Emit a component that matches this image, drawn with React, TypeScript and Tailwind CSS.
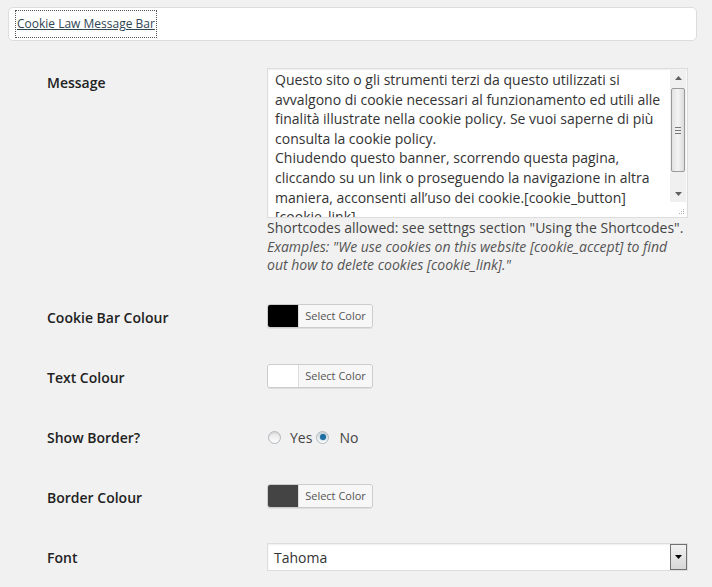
import React from "react";

function ColorPicker({ color }: { color: string }) {
  return (
    <div className="flex h-[24px] w-[106px] mb-[3px] rounded-[3px] border border-[#cccccc] shadow-[0_1px_0_rgba(0,0,0,0.08)] overflow-hidden">
      <div className="w-[30px] h-full" style={{ backgroundColor: color }} />
      <div className="flex-1 flex items-center justify-center bg-[#f7f7f7] border-l border-[#dddddd] text-[11px] text-[#555] leading-none">
        Select Color
      </div>
    </div>
  );
}

function Radio({ checked }: { checked?: boolean }) {
  return (
    <span className="inline-flex items-center justify-center w-[13px] h-[13px] rounded-full border border-[#b4b9be] bg-[linear-gradient(#e6e6e6,#fdfdfd)] shadow-[inset_0_1px_2px_rgba(0,0,0,0.1)]">
      {checked && <span className="w-[6px] h-[6px] rounded-full bg-[#1e6f9f] shadow-[0_0_2px_#4aa3d6]" />}
    </span>
  );
}

function Row({ label, children, className = "", labelClass = "" }: { label: string; children: React.ReactNode; className?: string; labelClass?: string }) {
  return (
    <div className={"flex " + className}>
      <div className={"w-[267px] shrink-0 pl-[47px] text-[14px] font-semibold text-[#222] " + labelClass}>{label}</div>
      <div className="flex-1">{children}</div>
    </div>
  );
}

export default function App() {
  const lines = [
    "Questo sito o gli strumenti terzi da questo utilizzati si",
    "avvalgono di cookie necessari al funzionamento ed utili alle",
    "finalità illustrate nella cookie policy. Se vuoi saperne di più",
    "consulta la cookie policy.",
    "Chiudendo questo banner, scorrendo questa pagina,",
    "cliccando su un link o proseguendo la navigazione in altra",
    "maniera, acconsenti all’uso dei cookie.[cookie_button]",
    "[cookie_link]",
  ];
  return (
    <div className="w-[712px] h-[587px] overflow-hidden bg-[#f1f1f1] text-[#444]" style={{ fontFamily: '"Open Sans", "Noto Sans", sans-serif' }}>
      <div className="pt-[7px] pl-[8px] pr-[15px]">
        <div className="h-[34px] bg-white border border-[#dddddd] rounded-[5px] flex items-center pl-[7px]">
          <span className="outline-1 outline-dotted outline-[#555] px-[1px] py-[4px] text-[12px] text-[#2f4553] underline leading-[18px]">
            Cookie Law Message Bar
          </span>
        </div>
      </div>

      <div className="pt-[27px]">
        <Row label="Message" className="h-[219px]" labelClass="pt-[4px]">
          <div className="w-[421px] h-[150px] bg-white border border-[#dddddd] flex shadow-[inset_0_1px_2px_rgba(0,0,0,0.07)]">
            <div className="flex-1 overflow-hidden pl-[7px] pt-[1px] text-[14px] leading-[19.6px] text-[#333]">
              {lines.map((l, i) => (
                <div key={i} className="whitespace-nowrap">{l}</div>
              ))}
            </div>
            <div className="w-[16px] shrink-0 flex flex-col bg-[#f0f0f0] mr-[1px] my-[1px]">
              <div className="h-[16px] flex items-center justify-center">
                <svg width="7" height="4" viewBox="0 0 7 4"><path d="M0 4 L3.5 0 L7 4 Z" fill="#606060" /></svg>
              </div>
              <div className="h-[2px]" />
              <div className="h-[84px] mx-[1px] rounded-[2px] border border-[#9a9a9a] bg-[linear-gradient(90deg,#e2e2e2,#f4f4f4,#dcdcdc)] flex items-center justify-center">
                <svg width="6" height="7" viewBox="0 0 6 7"><path d="M0 0.5H6M0 3.5H6M0 6.5H6" stroke="#777" strokeWidth="1" /></svg>
              </div>
              <div className="flex-1" />
              <div className="h-[16px] flex items-center justify-center">
                <svg width="7" height="4" viewBox="0 0 7 4"><path d="M0 0 L3.5 4 L7 0 Z" fill="#606060" /></svg>
              </div>
              <div className="h-[14px] bg-white flex items-end justify-end pr-[1px] pb-[1px]">
                <svg width="8" height="8" viewBox="0 0 8 8"><g fill="#aaa"><rect x="6" y="2" width="1" height="1" /><rect x="4" y="4" width="1" height="1" /><rect x="6" y="4" width="1" height="1" /><rect x="2" y="6" width="1" height="1" /><rect x="4" y="6" width="1" height="1" /><rect x="6" y="6" width="1" height="1" /></g></svg>
              </div>
            </div>
          </div>
          <div className="pt-[1px] text-[14px] leading-[18.5px]">
            <div className="text-[#444] whitespace-nowrap">Shortcodes allowed: see settngs section "Using the Shortcodes".</div>
            <div className="italic text-[#555] whitespace-nowrap">Examples: "We use cookies on this website [cookie_accept] to find</div>
            <div className="italic text-[#555] whitespace-nowrap">out how to delete cookies [cookie_link]."</div>
          </div>
        </Row>

        <Row label="Cookie Bar Colour" className="h-[60px] items-center">
          <ColorPicker color="#000000" />
        </Row>
        <Row label="Text Colour" className="h-[60px] items-center">
          <ColorPicker color="#ffffff" />
        </Row>
        <Row label="Show Border?" className="h-[60px] items-center">
          <div className="flex items-center text-[14px] text-[#444] pl-[1px]">
            <Radio />
            <span className="ml-[9px] mr-[4px]">Yes</span>
            <Radio checked />
            <span className="ml-[10px]">No</span>
          </div>
        </Row>
        <Row label="Border Colour" className="h-[60px] items-center">
          <ColorPicker color="#444444" />
        </Row>
        <Row label="Font" className="h-[60px] items-center">
          <div className="w-[421px] h-[28px] bg-white border border-[#dddddd] flex items-center shadow-[inset_0_1px_2px_rgba(0,0,0,0.07)]">
            <div className="flex-1 pl-[6px] text-[14px] text-[#333]">Tahoma</div>
            <div className="w-[17px] h-[26px] border border-[#707070] bg-[linear-gradient(#f2f2f2,#d6d6d6)] flex items-center justify-center">
              <svg width="7" height="4" viewBox="0 0 7 4"><path d="M0 0 L3.5 4 L7 0 Z" fill="#000" /></svg>
            </div>
          </div>
        </Row>
      </div>
    </div>
  );
}
